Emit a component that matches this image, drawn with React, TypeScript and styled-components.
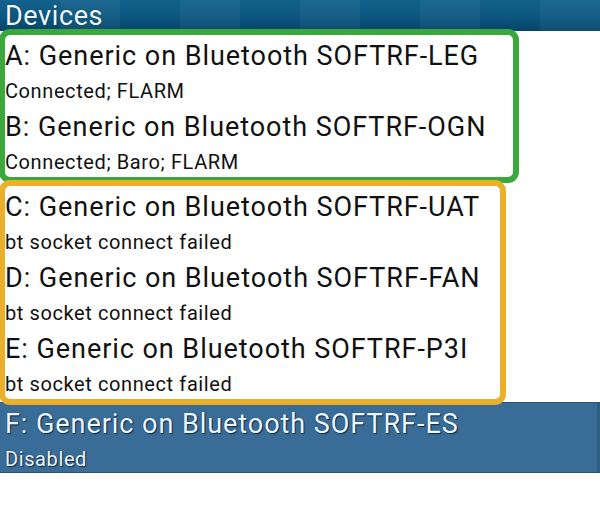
import React from "react";
import styled, { createGlobalStyle } from "styled-components";

const Global = createGlobalStyle`
  html, body { margin: 0; padding: 0; background: #ffffff; }
  body { font-family: Roboto, "Noto Sans", sans-serif; width: 600px; height: 517px; overflow: hidden; }
`;

const Page = styled.div`
  width: 600px;
  height: 517px;
  background: #ffffff;
  display: flex;
  flex-direction: column;
  overflow: hidden;
`;

const Header = styled.div`
  height: 31px;
  flex: none;
  display: flex;
  align-items: flex-end;
  padding-left: 5px;
  background:
    repeating-linear-gradient(90deg, rgba(255,255,255,0.0) 0 60px, rgba(255,255,255,0.04) 60px 120px),
    linear-gradient(180deg, #13628d 0%, #0b5680 55%, #064568 100%);
  color: #f4fbff;
  font-size: 27px;
  letter-spacing: 0.6px;
  line-height: 30px;
  text-shadow: 0 0 1px rgba(0, 30, 50, 0.8);
`;

type Tone = "green" | "yellow";

const Group = styled.div<{ $tone: Tone; $w: number }>`
  width: ${(p) => p.$w}px;
  box-sizing: border-box;
  margin-left: -1px;
  margin-top: ${(p) => (p.$tone === "green" ? -2 : -3)}px;
  border: 6px solid ${(p) => (p.$tone === "green" ? "#3aa83a" : "#eab02c")};
  border-radius: 11px;
  background: #ffffff;
  position: relative;
  z-index: 1;
  flex: none;
`;

const Row = styled.div<{ $selected?: boolean }>`
  height: 71px;
  box-sizing: border-box;
  padding-left: ${(p) => (p.$selected ? 5 : 0)}px;
  display: flex;
  flex-direction: column;
  color: ${(p) => (p.$selected ? "#eef7ff" : "#111111")};
  ${(p) =>
    p.$selected
      ? `
    background: #3a6c98;
    border-top: 1px solid #2b5474;
    border-bottom: 1px solid #2b5474;
    border-right: 3px solid #2f5d80;
    margin-top: -3px;
    text-shadow: 0 0 1px #0e2a40, 1px 1px 1px #0e2a40;
    flex: none;
  `
      : ""}
`;

const Title = styled.div`
  font-size: 27px;
  letter-spacing: 0.95px;
  line-height: 32px;
  padding-top: 5px;
  white-space: nowrap;
`;

const Sub = styled.div`
  font-size: 20px;
  letter-spacing: 0.6px;
  line-height: 24px;
  margin-top: 7px;
  white-space: nowrap;
`;

type Dev = { title: string; status: string };

const green: Dev[] = [
  { title: "A: Generic on Bluetooth SOFTRF-LEG", status: "Connected; FLARM" },
  { title: "B: Generic on Bluetooth SOFTRF-OGN", status: "Connected; Baro; FLARM" },
];
const yellow: Dev[] = [
  { title: "C: Generic on Bluetooth SOFTRF-UAT", status: "bt socket connect failed" },
  { title: "D: Generic on Bluetooth SOFTRF-FAN", status: "bt socket connect failed" },
  { title: "E: Generic on Bluetooth SOFTRF-P3I", status: "bt socket connect failed" },
];

const DeviceRow = ({ d, selected }: { d: Dev; selected?: boolean }) => (
  <Row $selected={selected}>
    <Title>{d.title}</Title>
    <Sub>{d.status}</Sub>
  </Row>
);

export default function App() {
  return (
    <Page>
      <Global />
      <Header>Devices</Header>
      <Group $tone="green" $w={520}>
        {green.map((d) => (
          <DeviceRow key={d.title} d={d} />
        ))}
      </Group>
      <Group $tone="yellow" $w={507}>
        {yellow.map((d) => (
          <DeviceRow key={d.title} d={d} />
        ))}
      </Group>
      <DeviceRow d={{ title: "F: Generic on Bluetooth SOFTRF-ES", status: "Disabled" }} selected />
    </Page>
  );
}
